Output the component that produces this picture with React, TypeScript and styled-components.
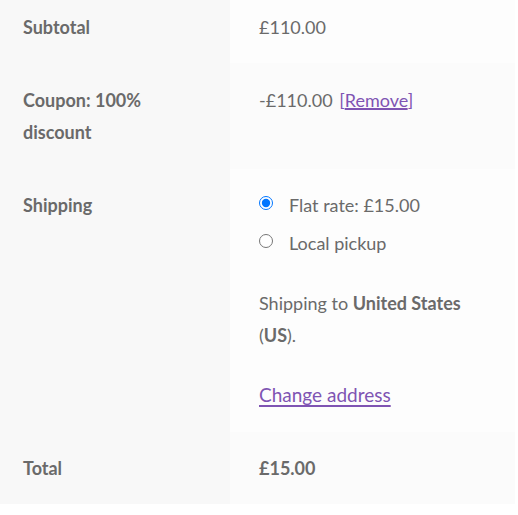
import styled, { createGlobalStyle } from "styled-components";

const GlobalStyle = createGlobalStyle`
  body {
    margin: 0;
    background: #fff;
    font-family: "Source Sans Pro", Lato, "Noto Sans", sans-serif;
    color: #6a6a6a;
  }
`;

export default function App() {
  return (
    <>
      <GlobalStyle />
      <TotalsTable>
        <tbody>
          <Row $even={false}>
            <Label $pt={11} $pb={20}>Subtotal</Label>
            <Value $pt={11} $pb={20}>£110.00</Value>
          </Row>
          <Row $even>
            <Label>
              Coupon: 100%
              <br />
              discount
            </Label>
            <Value>
              -£110.00 <RemoveLink href="#">[<u>Remove</u>]</RemoveLink>
            </Value>
          </Row>
          <Row $even={false}>
            <Label $pt={20}>Shipping</Label>
            <Value $pt={20}>
              <MethodList>
                <Method>
                  <input type="radio" name="shipping" defaultChecked />
                  <span>Flat rate: £15.00</span>
                </Method>
                <Method>
                  <input type="radio" name="shipping" />
                  <span>Local pickup</span>
                </Method>
              </MethodList>
              <Destination>
                Shipping to <strong>United States</strong>
                <br />
                (<strong>US</strong>).
              </Destination>
              <ChangeAddress href="#">Change address</ChangeAddress>
            </Value>
          </Row>
          <Row $even>
            <Label $pt={20} $pb={20}>Total</Label>
            <Value $pt={20} $pb={20}>
              <strong>£15.00</strong>
            </Value>
          </Row>
        </tbody>
      </TotalsTable>
    </>
  );
}

const TotalsTable = styled.table`
  width: 515px;
  border-collapse: collapse;
  font-size: 18px;
  line-height: 32px;
`;

const Row = styled.tr<{ $even: boolean }>`
  & > td {
    background: ${(p) => (p.$even ? "#fbfbfb" : "#fdfdfd")};
  }
`;

const Label = styled.th<{ $pt?: number; $pb?: number }>`
  width: 230px;
  box-sizing: border-box;
  text-align: left;
  vertical-align: top;
  font-weight: 700;
  background: #f8f8f8;
  padding: ${(p) => p.$pt ?? 21}px 12px ${(p) => p.$pb ?? 21}px 23px;
`;

const Value = styled.td<{ $pt?: number; $pb?: number }>`
  vertical-align: top;
  padding: ${(p) => p.$pt ?? 21}px 12px ${(p) => p.$pb ?? 21}px 29px;

  strong {
    font-weight: 700;
  }
`;

const RemoveLink = styled.a`
  color: #7f54b3;
  text-decoration: none;
  margin-left: 2px;

  u {
    text-decoration-thickness: 2px;
  }
`;

const MethodList = styled.ul`
  list-style: none;
  margin: 0 0 28px;
  padding: 0;
  display: flex;
  flex-direction: column;
  gap: 6px;
`;

const Method = styled.li`
  display: flex;
  align-items: center;
  gap: 16px;

  input {
    margin: 0;
    width: 14px;
    height: 14px;
    transform: translateY(-2px);
  }
`;

const Destination = styled.p`
  margin: 0 0 28px;
`;

const ChangeAddress = styled.a`
  display: block;
  font-size: 19px;
  color: #7f54b3;
  text-decoration: underline;
  text-decoration-thickness: 2px;
  text-underline-offset: 3px;
`;
